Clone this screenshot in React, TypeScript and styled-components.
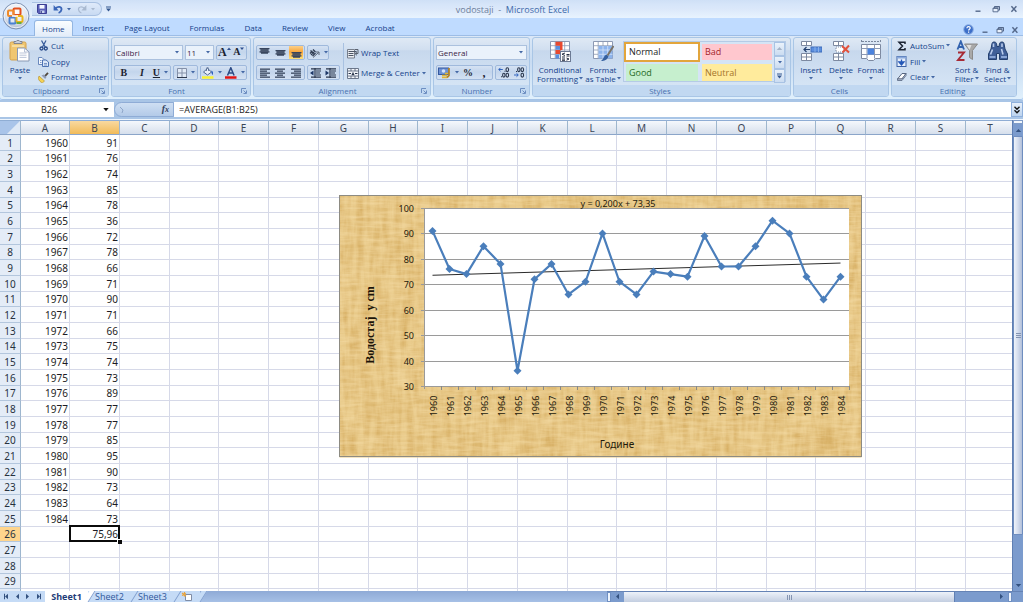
import React from 'react';
import styled, { createGlobalStyle, css } from 'styled-components';

const Global = createGlobalStyle`
  *, *::before, *::after { box-sizing: border-box; }
  html, body { margin: 0; padding: 0; }
  body { font-family: 'Open Sans', 'Noto Sans', sans-serif; font-size: 8px; line-height: 10px; color: #15428b; overflow: hidden; }
  button, input { font: inherit; color: inherit; margin: 0; padding: 0; border: 0; background: none; }
  svg { display: block; flex: none; }
`;

const Window = styled.div`
  display: flex;
  flex-direction: column;
  height: 100vh;
  background: #bfdbff;
`;

/* ---------- Title bar ---------- */

const TitleBar = styled.header`
  position: relative;
  display: flex;
  align-items: center;
  height: 18px;
  padding-left: 32px;
  padding-right: 5px;
  background: linear-gradient(#cfe0f6, #d6e5f9 25%, #dbe8fa 50%, #e8f3fe);
`;

const OfficeButton = styled.button`
  position: absolute;
  left: 2px;
  top: 2px;
  z-index: 2;
`;

const QuickAccess = styled.div`
  display: flex;
  align-items: center;
  gap: 6px;
  width: 70px;
  height: 14px;
  margin-right: 4px;
  padding-left: 5px;
  border: 1px solid #a9c1e2;
  border-left: 0;
  border-radius: 0 7px 7px 0;
  background: linear-gradient(#dfeafa, #c8daf2);
`;

const IconButton = styled.button`
  display: flex;
  align-items: center;
  gap: 4px;
`;

const Title = styled.h1`
  flex: 1;
  margin: 0;
  padding-top: 2px;
  padding-right: 60px;
  text-align: center;
  font-size: 9px;
  font-weight: 400;
  line-height: 12px;
  color: #6d7f9c;
  white-space: pre;
  span { color: #3e6aaa; }
`;

const WindowButtons = styled.div<{ $gap: number }>`
  display: flex;
  align-items: center;
  gap: ${p => p.$gap}px;
`;

/* ---------- Tabs ---------- */

const TabStrip = styled.nav`
  display: flex;
  align-items: flex-end;
  height: 18px;
  padding-left: 34px;
  padding-right: 4px;
  border-bottom: 1px solid #9dbde6;
  background: #bfdbff;
`;

const Tab = styled.button<{ $active?: boolean }>`
  height: 15px;
  padding: 0 10px;
  line-height: 14px;
  ${p => p.$active && css`
    && {
      height: 16px;
      margin-bottom: -1px;
      padding: 0 7px;
      border: 1px solid #93b6e2;
      border-bottom: 0;
      border-radius: 3px 3px 0 0;
      background: linear-gradient(#fafdff, #e3edf9);
    }
  `}
`;

const Spacer = styled.div`
  flex: 1;
`;

/* ---------- Ribbon ---------- */

const Ribbon = styled.div`
  display: flex;
  gap: 2px;
  height: 64px;
  padding: 1px 6px 2px 2px;
  border-radius: 0 0 3px 3px;
  background: linear-gradient(#dbe8f7, #c9dcf2 40%, #e0f0fc 100%);
  border-bottom: 1px solid #a5c3e6;
`;

const GroupBox = styled.section<{ $width: number }>`
  display: flex;
  flex-direction: column;
  flex: none;
  width: ${p => p.$width}px;
  border: 1px solid #a9c6e6;
  border-radius: 3px;
  overflow: hidden;
  background: linear-gradient(#dfe9f5, #d1dff0 20%, #c7d8ed 22%, #d9e8f7);
`;

const GroupBody = styled.div<{ $gap?: number; $pad?: number }>`
  display: flex;
  flex: 1;
  min-height: 0;
  gap: ${p => p.$gap ?? 0}px;
  padding: 0 ${p => p.$pad ?? 2}px;
`;

const GroupLabel = styled.footer`
  display: flex;
  align-items: center;
  flex: none;
  height: 11px;
  padding-right: 3px;
  background: #c1d8f1;
  color: #4a72b0;
  span { flex: 1; text-align: center; }
`;

const BigButton = styled.button<{ $width: number }>`
  display: flex;
  flex-direction: column;
  align-items: center;
  width: ${p => p.$width}px;
  padding-top: 2px;
  line-height: 9px;
  white-space: nowrap;
  svg:first-child { margin-bottom: 3px; }
`;

const CaretLine = styled.span`
  display: flex;
  align-items: center;
  gap: 1px;
  min-height: 9px;
  && svg { margin: 0; }
`;

const SmallColumn = styled.div`
  display: flex;
  flex-direction: column;
`;

const SmallButton = styled.button`
  display: flex;
  align-items: center;
  gap: 2px;
  height: 16px;
  white-space: nowrap;
`;

const ToolRows = styled.div`
  display: flex;
  flex-direction: column;
  gap: 5px;
  padding-top: 7px;
`;

const ToolRow = styled.div`
  display: flex;
  gap: 2px;
  height: 15px;
`;

const ToolSet = styled.div<{ $width: number }>`
  display: flex;
  align-items: center;
  justify-content: space-around;
  width: ${p => p.$width}px;
  border: 1px solid #9fb9dc;
  border-radius: 2px;
  background: linear-gradient(#d5e2f3, #c3d5ec 45%, #d3e1f3);
`;

const Toggle = styled(IconButton)<{ $on?: boolean }>`
  justify-content: center;
  height: 13px;
  min-width: 14px;
  ${p => p.$on && css`&& { background: linear-gradient(#fcd08a, #f9a63a 45%, #fde07a); }`}
`;

const FontSizeToggle = styled(Toggle)`
  gap: 0;
  align-items: flex-start;
`;

const Letter = styled.span<{ $size?: number }>`
  font-family: 'Liberation Serif', serif;
  font-size: ${p => p.$size ?? 10}px;
  line-height: 12px;
  font-weight: 700;
  color: #1c2431;
`;

const Combo = styled.label<{ $width: number }>`
  display: flex;
  align-items: center;
  width: ${p => p.$width}px;
  height: 15px;
  padding: 0 3px 0 1px;
  border: 1px solid #abc1de;
  background: #eaf2fb;
  color: #3a2342;
  input { flex: 1; min-width: 0; width: 10px; }
`;

const Divider = styled.div`
  width: 1px;
  margin: 5px 3px;
  background: #a8c1e1;
`;

const Gallery = styled.div`
  display: grid;
  grid-template-columns: 76px 74px 11px;
  grid-template-rows: 20px 21px;
  margin: 3px 0 3px 1px;
  border: 1px solid #b5cbe6;
  background: #d5e4f5;
`;

const StyleCell = styled.button<{ $bg: string; $fg: string; $selected?: boolean }>`
  && {
    margin: 2px;
    padding-left: 3px;
    text-align: left;
    font-size: 9px;
    color: ${p => p.$fg};
    background: ${p => p.$bg};
  }
  ${p => p.$selected && css`
    &&& {
      margin: 0;
      border: 2px solid #e2a53c;
    }
  `}
`;

const GalleryArrows = styled.div`
  grid-column: 3;
  grid-row: 1 / 3;
  display: grid;
  grid-template-rows: 1fr 1fr 1fr;
  button {
    display: grid;
    place-items: center;
    border: 1px solid #a9c3e4;
    background: linear-gradient(#eaf2fb, #cbdcf1);
  }
`;

/* ---------- Formula bar ---------- */

const FormulaBar = styled.div`
  display: flex;
  height: 20px;
  padding: 2px 0;
  background: #a9c5e6;
  color: #1b1b1b;
  border-bottom: 1px solid #eef5fd;
`;

const NameBox = styled.label`
  display: flex;
  align-items: center;
  width: 114px;
  padding-right: 5px;
  background: #fff;
  font-size: 9px;
  input { flex: 1; min-width: 0; padding-right: 5px; text-align: center; }
`;

const FxArea = styled.div`
  display: flex;
  align-items: center;
  width: 60px;
  padding: 0 4px;
  justify-content: space-between;
  border: 1px solid #8facd6;
  border-radius: 8px 0 0 8px;
  background: linear-gradient(#cfdff3, #b3cae8);
`;

const Fx = styled.button`
  && {
    font-family: 'Liberation Serif', serif;
    font-style: italic;
    font-weight: 700;
    font-size: 10px;
    color: #33415c;
  }
  small { font-size: 8px; }
`;

const FormulaInput = styled.input`
  && {
    flex: 1;
    padding-left: 5px;
    background: #fff;
    font-size: 9px;
  }
`;

const ExpandButton = styled.button`
  display: grid;
  place-items: center;
  width: 12px;
  && { border: 1px solid #8fb0dc; background: linear-gradient(#e7f0fb, #bcd3ee); }
`;

/* ---------- Sheet ---------- */

const Work = styled.main`
  display: flex;
  flex: 1;
  min-height: 0;
`;

const SheetArea = styled.div`
  position: relative;
  flex: 1;
  min-width: 0;
  overflow: hidden;
  background: #fff;
`;

const Sheet = styled.table`
  width: 100%;
  min-width: 1015px;
  table-layout: fixed;
  border-collapse: separate;
  border-spacing: 0;
  font-family: 'Noto Sans', sans-serif;
  font-size: 10px;
  line-height: 14px;
  color: #1c1c24;
  th, td { padding: 0; }
`;

const RowLine = styled.tr<{ $short?: boolean }>`
  height: ${p => (p.$short ? 15 : 16)}px;
`;

const ColHead = styled.th<{ $active?: boolean }>`
  height: 15px;
  border-right: 1px solid #9eb6ce;
  border-bottom: 1px solid #8ba5c9;
  border-top: 1px solid #8fadd4;
  font-weight: 400;
  line-height: 12px;
  color: #3a4656;
  background: ${p => (p.$active ? 'linear-gradient(#f9d9a0, #f1bb59)' : 'linear-gradient(#f5f8fc, #d6dfec)')};
`;

const Corner = styled(ColHead)`
  background: linear-gradient(135deg, #a9c4e9 60%, #dfe9f6 61%);
`;

const RowHead = styled.th<{ $active?: boolean }>`
  border-right: 1px solid #9eb6ce;
  border-bottom: 1px solid #b3c6dd;
  font-weight: 400;
  color: #273140;
  background: ${p => (p.$active ? '#ffd58d' : '#e4ecf7')};
`;

const Cell = styled.td<{ $selected?: boolean }>`
  border-right: 1px solid #d6d9e8;
  border-bottom: 1px solid #d6d9e8;
  text-align: right;
  && { padding-right: 1px; }
  ${p => p.$selected && css`
    position: relative;
    z-index: 1;
    &::before {
      content: '';
      position: absolute;
      inset: -2px -1px -1px -1px;
      border: 2px solid #0b0b0b;
    }
    &::after {
      content: '';
      position: absolute;
      right: -3px;
      bottom: -3px;
      width: 5px;
      height: 5px;
      background: #0b0b0b;
      border-left: 1px solid #fff;
      border-top: 1px solid #fff;
    }
  `}
`;

const ChartFrame = styled.figure`
  position: absolute;
  left: 339px;
  top: 75px;
  margin: 0;
`;

/* ---------- Scroll bars and sheet tabs ---------- */

const VScroll = styled.div`
  display: flex;
  flex-direction: column;
  width: 11px;
  background: #7b9bcd;
  border-left: 1px solid #5f7fb3;
`;

const SplitGrip = styled.div`
  height: 4px;
  border: 1px solid #7f9cc8;
  background: #f2f7fd;
`;

const ScrollArrow = styled.button`
  display: grid;
  place-items: center;
  flex: none;
  width: 10px;
  height: 12px;
`;

const HScrollArrow = styled(ScrollArrow)`
  width: 13px;
  height: 9px;
`;

const VThumb = styled.div`
  display: grid;
  place-items: center;
  flex: 400;
  border: 1px solid #6e8dbf;
  border-radius: 1px;
  background: linear-gradient(90deg, #eef3fa, #d3dced 50%, #b2c0da);
`;

const VTrack = styled.div`
  flex: 44;
`;

const BottomBar = styled.div`
  display: flex;
  height: 11px;
  background: linear-gradient(#8faad6, #a6c0e6);
`;

const SheetTabs = styled.div`
  display: flex;
  flex: 607;
  min-width: 0;
`;

const NavButtons = styled.div`
  display: flex;
  justify-content: space-around;
  align-items: center;
  width: 45px;
  padding: 0 1px;
  background: #c5dbf6;
`;

const SheetTab = styled.button<{ $active?: boolean; $width: number }>`
  position: relative;
  display: flex;
  justify-content: center;
  align-items: center;
  width: ${p => p.$width}px;
  height: 11px;
  && {
    line-height: 10px;
    font-size: 9px;
    font-weight: ${p => (p.$active ? 700 : 400)};
    color: ${p => (p.$active ? '#1e3c78' : '#31589b')};
    background: ${p => (p.$active ? '#fff' : '#c5dbf6')};
  }
  &::after {
    content: '';
    position: absolute;
    z-index: 1;
    right: -4px;
    top: 0;
    width: 6px;
    height: 11px;
    border-right: 1px solid #7f9dcd;
    background: ${p => (p.$active ? '#fff' : '#c5dbf6')};
    transform: skewX(-32deg);
  }
`;

const HScroll = styled.div`
  display: flex;
  flex: 416;
  border-top: 1px solid #6583b5;
  background: #7b9bcd;
`;

const HThumb = styled.div`
  display: grid;
  place-items: center;
  flex: 331;
  border-right: 1px solid #5f7fb3;
  background: linear-gradient(#edf2fa, #c3cee1);
`;

const HTrack = styled.div`
  flex: 40;
`;

const HGrip = styled.div`
  width: 4px;
  border: 1px solid #6f8fc2;
  background: #eff5fd;
`;

const ScrollCorner = styled.div`
  width: 11px;
`;

/* ---------- Icons ---------- */

const Caret = ({ color = '#4468a5', big }: { color?: string; big?: boolean }) => (
  <svg width={big ? 6 : 4} height={big ? 4 : 3} viewBox="0 0 4 3" aria-hidden="true">
    <path d="M0 0h4L2 2.5z" fill={color} />
  </svg>
);

const Arrow = ({ dir, color = '#33517f', bar }: { dir: 'left' | 'right' | 'up' | 'down'; color?: string; bar?: boolean }) => {
  const turn = { right: 0, down: 90, left: 180, up: 270 }[dir];
  return (
    <svg width="7" height="7" viewBox="0 0 7 7" aria-hidden="true">
      <g transform={`rotate(${turn} 3.5 3.5)`} fill={color}>
        <path d="M2 .8l3 2.7-3 2.7z" />
        {bar && <path d="M5 .8h1v5.4H5z" />}
      </g>
    </svg>
  );
};

const Launcher = () => (
  <IconButton aria-label="More options">
    <svg width="6" height="6" viewBox="0 0 6 6">
      <path d="M.5 5V.5H5M2.5 2.5l2.5 2.5M5.5 2.5v3h-3" fill="none" stroke="#6386bb" strokeWidth=".9" />
    </svg>
  </IconButton>
);

const OfficeLogo = () => (
  <svg width="28" height="28" viewBox="0 0 28 28">
    <defs>
      <radialGradient id="orb" cx=".5" cy=".35" r=".65">
        <stop offset="0" stopColor="#fff" />
        <stop offset=".6" stopColor="#e3e8f1" />
        <stop offset="1" stopColor="#a5b4cd" />
      </radialGradient>
    </defs>
    <circle cx="14" cy="14" r="13" fill="url(#orb)" stroke="#7f93b5" />
    <circle cx="14" cy="14" r="11.8" fill="none" stroke="#f8fbff" strokeWidth=".8" />
    <g fill="none" strokeWidth="2">
      <rect x="11.5" y="6.5" width="7" height="6.5" rx="1" stroke="#e2501f" />
      <rect x="6" y="8.5" width="5.5" height="5.5" rx="1" stroke="#f08b2a" />
      <rect x="7.5" y="15.5" width="6" height="6" rx="1" stroke="#4a82d2" />
      <rect x="14.5" y="14" width="6" height="6" rx="1" stroke="#e9b51c" />
      <path d="M14.5 21h5" stroke="#6aab3a" />
      <path d="M10 14h6" stroke="#fff" strokeWidth="1.5" />
    </g>
  </svg>
);

const SaveIcon = () => (
  <svg width="10" height="10" viewBox="0 0 10 10">
    <path d="M.5.5h9v9h-8l-1-1z" fill="#5a5fb8" stroke="#3c3f94" />
    <path d="M2.5 1h5v3.6h-5z" fill="#f4f7ff" />
    <path d="M3 6.5h4.5V9H3z" fill="#c9d4ee" />
    <path d="M3.6 7h1.2v2H3.6z" fill="#2c3380" />
  </svg>
);

const UndoIcon = ({ faded }: { faded?: boolean }) => (
  <svg width="10" height="9" viewBox="0 0 10 9">
    <g transform={faded ? 'translate(10 0) scale(-1 1)' : undefined}>
      <path d="M2.5 3.5C5 1 8.8 1.6 8.5 4.6 8.3 6.2 7.2 7.4 5.6 8" fill="none" stroke={faded ? '#a9b9d0' : '#3b66b8'} strokeWidth={faded ? 1.2 : 1.8} />
      <path d="M.6 0v5.4h5z" fill={faded ? '#a9b9d0' : '#3b66b8'} />
    </g>
  </svg>
);

const MoreIcon = () => (
  <svg width="5" height="6" viewBox="0 0 5 6"><path d="M0 .4h5v1H0zM0 2.6h5L2.5 5.4z" fill="#35588f" /></svg>
);

const MinIcon = () => (
  <svg width="8" height="8" viewBox="0 0 8 8"><path d="M1.5 5.5h5v1.4h-5z" fill="#54688a" /></svg>
);
const RestoreIcon = () => (
  <svg width="8" height="8" viewBox="0 0 8 8">
    <path d="M2.5 5V1.5h5v3.6H6M2.5 1.9h5" fill="none" stroke="#54688a" />
    <path d="M1 3h5v3.8H1zM1 3.4h5" fill="#e8f0fb" stroke="#54688a" strokeWidth=".9" />
  </svg>
);
const CloseIcon = () => (
  <svg width="8" height="8" viewBox="0 0 8 8"><path d="M1.4 1.2l5 5.6M6.4 1.2l-5 5.6" stroke="#54688a" strokeWidth="1.4" /></svg>
);
const HelpIcon = () => (
  <svg width="11" height="11" viewBox="0 0 11 11">
    <circle cx="5.5" cy="5.5" r="4.8" fill="#3d6fc9" stroke="#8eb0e4" />
    <path d="M3.9 4.3c0-2.4 3.4-2.2 3.3-.2 0 1.2-1.6 1.2-1.6 2.5M5.6 7.5v1.2" fill="none" stroke="#fff" strokeWidth="1.2" />
  </svg>
);

const PasteIcon = () => (
  <svg width="22" height="22" viewBox="0 0 22 22">
    <rect x="1" y="2" width="16" height="18" rx="1.5" fill="#f0c670" stroke="#d3a14c" />
    <path d="M5 3.5V1.5h2C7.5 0 10.5 0 11 1.5h2v2z" fill="#c9cfdb" stroke="#6e7689" strokeWidth=".8" />
    <path d="M3 5h12v2H3z" fill="#f8dd9f" />
    <path d="M8.5 8h7l4.5 4v9H8.5z" fill="#fff" stroke="#8a99b5" />
    <path d="M15.5 8v4H20M10.5 13h7M10.5 15.2h7M10.5 17.4h7" fill="none" stroke="#a9b6cf" strokeWidth=".8" />
  </svg>
);
const CutIcon = () => (
  <svg width="11" height="11" viewBox="0 0 11 11">
    <path d="M3.5.5l3.7 6.5M8 .5L4.5 7" stroke="#3c5f9c" strokeWidth="1.3" />
    <circle cx="3.5" cy="8.5" r="1.5" fill="none" stroke="#274a8a" strokeWidth="1.3" />
    <circle cx="7.8" cy="8.5" r="1.5" fill="none" stroke="#274a8a" strokeWidth="1.3" />
  </svg>
);
const CopyIcon = () => (
  <svg width="11" height="11" viewBox="0 0 11 11">
    <path d="M.5 1.5H4l2 2v5H.5z" fill="#f3f7fd" stroke="#6a89bd" />
    <path d="M4.5 4H8l2.5 2v4.5h-6z" fill="#dce8f8" stroke="#4d73b3" />
    <path d="M2 4.5h1.5M2 6.5h1.5M6 7.5h3M6 9h3" stroke="#4d73b3" strokeWidth=".7" />
  </svg>
);
const BrushIcon = () => (
  <svg width="11" height="11" viewBox="0 0 11 11">
    <path d="M1 4l5.5 5-2 1.8C2.5 10.5 1 8.5.3 6.5z" fill="#f5d354" stroke="#b28a22" strokeWidth=".6" />
    <path d="M3.5 3.5l3.7 3.6 1.3-2-2.6-2.6z" fill="#8f9cb6" />
    <path d="M7.2 3.8L10 .8" stroke="#51473d" strokeWidth="1.8" />
  </svg>
);

const Lines = ({ inset, from }: { inset: number; from: 'left' | 'center' | 'right' }) => {
  const x = { left: 0, center: inset / 2, right: inset }[from];
  return (
    <svg width="10" height="10" viewBox="0 0 10 10" fill="#39465e">
      {[0, 2, 4, 6, 8].map((y, i) => (
        <rect key={y} x={i % 2 ? x : 0} y={y + 0.5} width={i % 2 ? 10 - inset : 10} height="1.3" />
      ))}
    </svg>
  );
};
const ValignIcon = ({ y }: { y: number }) => (
  <svg width="11" height="11" viewBox="0 0 11 11" fill="#39465e">
    <path d={`M.5 ${y}h10v1.3H.5zM1.5 ${y + 1.6}h8v1.2h-8zM.5 ${y + 3.2}h10v1.2H.5zM2 ${y + 4.6}h7v1.2h-7z`} />
    <path d={`M1.5 ${y}h8v5h-8z`} opacity=".5" />
  </svg>
);
const OrientIcon = () => (
  <svg width="11" height="10" viewBox="0 0 11 10">
    <path d="M1 5.5l2.5-2.5M1.5 2.5l3.5 3.5M4 1.5l2.5 2.5M3.5 8l3-3M2 7l3-3" stroke="#2e3a50" strokeWidth="1.3" />
    <path d="M4 9.5l5.5-5M7 4h3v3" fill="none" stroke="#5a6577" />
  </svg>
);
const IndentIcon = ({ dir }: { dir: 1 | -1 }) => (
  <svg width="12" height="10" viewBox="0 0 12 10">
    <path d="M1 .8h10M6 3h5M6 5h4M6 7h5M1 9.2h10M5 0v10" stroke="#2b374d" strokeWidth="1.2" />
    <path d={dir === 1 ? 'M0 5l3.5-2.500v5z' : 'M4 5L.5 2.500v5z'} fill="#1d3767" />
  </svg>
);
const WrapIcon = () => (
  <svg width="12" height="11" viewBox="0 0 12 11">
    <path d="M.5 1.500h7v8.500h-7z" fill="#e9ecf1" stroke="#777f8c" />
    <path d="M1.500 3.500h8M1.500 5.500h5M1.500 7.500h5" stroke="#4d5666" />
    <path d="M8 1.500h3v4H8.500M10 3.800L8 5.600l2 1.700" fill="none" stroke="#5a6270" />
  </svg>
);
const MergeIcon = () => (
  <svg width="12" height="11" viewBox="0 0 12 11">
    <path d="M.5.5h11v10H.5zM.5 3h11M.5 8h11M4 .5V3M8 .5V3M4 8v2.500M8 8v2.500" fill="#f2f5fa" stroke="#5f6b80" strokeWidth=".9" />
    <path d="M1.500 5.500h2.500M8 5.500h2.500" stroke="#2b374d" />
    <path d="M6 3.800l1.600 3.400H4.400z" fill="#2b374d" />
  </svg>
);
const BorderIcon = () => (
  <svg width="10" height="10" viewBox="0 0 10 10">
    <path d="M.5.5h9v9h-9zM5 .5v9M.5 5h9" fill="#e1eaf6" stroke="#8491a9" />
    <path d="M0 9.500h10" stroke="#2d384c" />
  </svg>
);
const FillIcon = () => (
  <svg width="12" height="12" viewBox="0 0 12 12">
    <path d="M1.500 5l4-3.500L9.500 5 5.500 8z" fill="#eaf0f9" stroke="#536a91" />
    <path d="M4.500 4V1.500c0-1.500 2-1.500 2 0V4" fill="none" stroke="#536a91" strokeWidth=".8" />
    <path d="M9.300 3.500c2 .8 2 2.500 1.500 4.500-1-.5-1.500-2-1.500-4.500z" fill="#2f63c0" />
    <path d="M0 9.200h11.500v2.600H0z" fill="#f8f231" />
  </svg>
);
const FontColorIcon = () => (
  <svg width="12" height="12" viewBox="0 0 12 12">
    <path d="M2.500 8.500L5.800.8l3.300 7.700M3.600 6h4.300" fill="none" stroke="#2b4a85" strokeWidth="1.500" />
    <path d="M0 9.200h11.500v2.600H0z" fill="#e21414" />
  </svg>
);
const CurrencyIcon = () => (
  <svg width="13" height="12" viewBox="0 0 13 12">
    <rect x=".5" y="1" width="10" height="6.500" fill="#6d92d4" stroke="#35599f" />
    <circle cx="5.500" cy="4" r="1.800" fill="#d5e2f7" />
    <path d="M4 8.500h5M4 10.500h5M7 6.500h3" stroke="#e0b638" strokeWidth="1.500" />
    <path d="M11 1v7.500l-2 2" fill="none" stroke="#b5852a" strokeWidth="1.800" />
  </svg>
);
const DecimalIcon = ({ less }: { less?: boolean }) => (
  <svg width="12" height="11" viewBox="0 0 12 11">
    <g fill="none" stroke="#2b374d" strokeWidth="1.100">
      <ellipse cx="9.300" cy="2.700" rx="1.300" ry="1.900" />
      {less && <ellipse cx="5.800" cy="2.700" rx="1.200" ry="1.900" />}
      <ellipse cx="9.300" cy="8.200" rx="1.300" ry="1.900" />
      {!less && <ellipse cx="5.800" cy="8.200" rx="1.200" ry="1.900" />}
    </g>
    <path d={less ? 'M1 8h4M3.500 6.300L5.300 8 3.500 9.700' : 'M.8 2.500h4M2.500.8L.8 2.500l1.700 1.700'} fill="none" stroke="#2f62bd" />
    <path d={less ? 'M3 4h1v1H3z' : 'M6.500 3.800h1v1h-1zM3 9.200h1v1H3z'} fill="#2b374d" />
  </svg>
);

const GridBase = ({ children }: { children?: React.ReactNode }) => (
  <svg width="22" height="22" viewBox="0 0 22 22">
    <path d="M1.500 1.500h19v17h-19z" fill="#fff" stroke="#8c99b3" />
    <path d="M1.500 5.700h19M1.500 10h19M1.500 14.300h19M6.200 1.500v17M11 1.500v17M15.700 1.500v17" stroke="#8c99b3" strokeWidth=".8" />
    {children}
  </svg>
);
const ConditionalIcon = () => (
  <GridBase>
    <path d="M6.500 1.800H11v4H6.500zM6.500 10h5v4h-5z" fill="#e8492f" />
    <path d="M6.500 6H11v3.800H6.500zM6.500 14.500H10v4H6.500z" fill="#5a8ede" />
    <path d="M11 1.800h2.500V10H11z" fill="#e8492f" />
    <rect x="11.500" y="11.500" width="10" height="10" fill="#fff" stroke="#6c7a94" />
    <path d="M16 13l-3 1.200 3 1.300M13 17h3M17.500 14.500h3M17.500 16h3M17.500 18l2.500 1-2.500 1.200M13 19h3M13 20.300h3" fill="none" stroke="#242e42" />
  </GridBase>
);
const TableStyleIcon = () => (
  <GridBase>
    <path d="M6.500 6h14v12.500h-14z" fill="#8db4ec" />
    <path d="M6.500 10h14M6.500 14.300h14M11 6v12.500M15.700 6v12.500" stroke="#d7e5fa" strokeWidth=".8" />
    <path d="M15.500 15.500L21.500 6" stroke="#7b7366" strokeWidth="2" />
    <path d="M14.500 14.500l2 2c-1.500 3.500-4 4.500-7.500 4.500 2.500-1.500 3-5.500 5.500-6.500z" fill="#35609f" />
  </GridBase>
);
const InsertIcon = () => (
  <svg width="22" height="22" viewBox="0 0 22 22">
    <path d="M1.500 1.500h10v4h-10zM6.500 1.500v4M1.500 13.500h10v7h-10zM6.500 13.500v7M1.500 17h10" fill="#fff" stroke="#7d89a0" />
    <rect x="11" y="7" width="11" height="5" fill="#5a8ede" stroke="#3e6cba" />
    <path d="M15 7v5M18.500 7v5" stroke="#9fc0f0" strokeWidth=".7" />
    <path d="M4 9.500h6M6.500 7L4 9.500 6.500 12" fill="none" stroke="#24406f" strokeWidth="1.200" />
  </svg>
);
const DeleteIcon = () => (
  <svg width="22" height="22" viewBox="0 0 22 22">
    <path d="M3.500 1.500h10v4h-10zM8.500 1.500v4M3.500 13.500h10v7h-10zM8.500 13.500v7M3.500 17h10" fill="#fff" stroke="#7d89a0" />
    <path d="M6 7h8v5H6z" fill="#fff" stroke="#7d89a0" strokeDasharray="1 1" />
    <path d="M12 6l7 6.500M19 5.500L12.500 12.500" stroke="#e2523c" strokeWidth="2" />
  </svg>
);
const FormatIcon = () => (
  <svg width="22" height="22" viewBox="0 0 22 22">
    <path d="M1.500 0v3M20.500 0v3M2 1.500h18" stroke="#7a879d" strokeDasharray="2 1" />
    <path d="M1.500 4.500h19v14h-5l-2 2h-5l-2-2h-5z" fill="#fff" stroke="#7d89a0" />
    <path d="M1.500 8.500h19M1.500 14.500h19M7 4.500v14M14.500 4.500v14" stroke="#8c99b3" />
    <path d="M7.500 8.500H14v6H7.500z" fill="#4b83de" />
  </svg>
);
const SigmaIcon = () => (
  <svg width="12" height="10" viewBox="0 0 12 10">
    <path d="M9 3V1.300H3L6.500 5 3 8.700h6V7" fill="none" stroke="#1b2332" strokeWidth="1.500" />
  </svg>
);
const FillDownIcon = () => (
  <svg width="12" height="11" viewBox="0 0 12 11">
    <rect x="1" y=".5" width="9" height="10" fill="#e5eefb" stroke="#3d62a6" />
    <path d="M1 .5h9v2H1z" fill="#8aa9dc" />
    <path d="M5.500 3.500v3.500M3 6l2.500 3L8 6z" stroke="#2458b8" strokeWidth="1.300" fill="#2458b8" />
  </svg>
);
const EraserIcon = () => (
  <svg width="12" height="10" viewBox="0 0 12 10">
    <path d="M1.500 7L6 1.500h4L6 7z" fill="#fff" stroke="#56657f" />
    <path d="M1.500 7v1.500H6L10 3.500v-2L6 7z" fill="#c8d3e5" stroke="#56657f" strokeWidth=".8" />
  </svg>
);
const SortIcon = () => (
  <svg width="22" height="22" viewBox="0 0 22 22">
    <path d="M8.500 4h13l-5 6.500v9l-3-2v-7z" fill="#a9a9a9" stroke="#8a8a8a" />
    <path d="M10.500 5h5l-2 5z" fill="#e0e0e0" />
    <path d="M1.500 9.500L4.800 1.500 8 9.500M2.700 7h4.200" fill="none" stroke="#3463ae" strokeWidth="1.900" />
    <path d="M2 12.500h6l-6 7.500h6.500" fill="none" stroke="#a72a35" strokeWidth="1.900" />
  </svg>
);
const BinocularsIcon = () => (
  <svg width="22" height="22" viewBox="0 0 22 22">
    <path d="M5 3.500C5 1.500 9 1.500 9.500 3.500l.5 3h2l.5-3c.5-2 4.500-2 4.500 0l1 5.500 2.500 5v5.500h-8v-6h-3v6H1.500V14L4 9z" fill="#3f5f98" stroke="#24406f" />
    <path d="M5.500 9.500L3.500 14.500M14.500 9l1.500 5.500M6.500 3.500v3.500M15 3.500v3.500" stroke="#b8cbec" strokeWidth="1.600" />
    <path d="M2.500 17h6M14 17h6" stroke="#88a5d6" strokeWidth="2" />
  </svg>
);
const NewSheetIcon = () => (
  <svg width="12" height="9" viewBox="0 0 12 9">
    <path d="M4.500 2.500h6v6h-6z" fill="#fff" stroke="#7f8da6" />
    <path d="M1 1l4 3M3.500 0v4.500M1 3.500l4-2" stroke="#e9a33a" strokeWidth="1.200" />
  </svg>
);

/* ---------- Chart ---------- */

const years = Array.from({ length: 25 }, (_, i) => 1960 + i);
const levels = [91, 76, 74, 85, 78, 36, 72, 78, 66, 71, 90, 71, 66, 75, 74, 73, 89, 77, 77, 85, 95, 90, 73, 64, 73];

const PLOT = { left: 85, right: 510, top: 13, bottom: 191 };
const xAt = (i: number) => PLOT.left + ((i + 0.5) * (PLOT.right - PLOT.left)) / levels.length;
const yAt = (v: number) => PLOT.bottom - ((v - 30) * (PLOT.bottom - PLOT.top)) / 70;

const ChartText = styled.text`
  font-family: 'Noto Sans', sans-serif;
  font-size: 9px;
  fill: #241a0c;
`;

const ChartTitleText = styled(ChartText)`
  font-size: 10px;
`;

const AxisTitle = styled.text`
  font-family: 'Liberation Serif', serif;
  font-size: 12px;
  font-weight: 700;
  fill: #1c1408;
  white-space: pre;
`;

const Chart = () => (
  <ChartFrame>
    <svg width="523" height="263" viewBox="0 0 523 263" role="img" aria-label="Водостај">
      <defs>
        <filter id="warp" x="0" y="0" width="100%" height="100%" colorInterpolationFilters="sRGB">
          <feTurbulence type="fractalNoise" baseFrequency="0.16 0.03" numOctaves="3" seed="4" />
          <feColorMatrix values="0 0 0 0 .76  0 0 0 0 .56  0 0 0 0 .22  2 0 0 0 -.6" />
        </filter>
        <filter id="weft" x="0" y="0" width="100%" height="100%" colorInterpolationFilters="sRGB">
          <feTurbulence type="fractalNoise" baseFrequency="0.04 0.3" numOctaves="3" seed="9" />
          <feColorMatrix values="0 0 0 0 .97  0 0 0 0 .88  0 0 0 0 .68  2 0 0 0 -.6" />
        </filter>
      </defs>
      <rect x=".5" y=".5" width="522" height="262" fill="#e8c988" />
      <rect x="1" y="1" width="521" height="261" filter="url(#warp)" opacity=".4" />
      <rect x="1" y="1" width="521" height="261" filter="url(#weft)" opacity=".5" />
      <rect x=".5" y=".5" width="522" height="261" fill="none" stroke="#8d8b82" />
      <rect x={PLOT.left} y={PLOT.top} width={PLOT.right - PLOT.left} height={PLOT.bottom - PLOT.top} fill="#fff" />
      {[30, 40, 50, 60, 70, 80, 90, 100].map(v => (
        <g key={v}>
          <path d={`M${PLOT.left - 3} ${Math.round(yAt(v)) + 0.5}H${PLOT.right}`} stroke="#9a9a9a" />
          <ChartText x="75" y={Math.round(yAt(v)) + 4} textAnchor="end">{v}</ChartText>
        </g>
      ))}
      <path d={`M${PLOT.left + 0.5} ${PLOT.top}V${PLOT.bottom + 3}`} stroke="#9a9a9a" />
      {years.map((year, i) => (
        <g key={year}>
          <path d={`M${Math.round(PLOT.left + (i + 1) * 17) + 0.5} ${PLOT.bottom}v4`} stroke="#8a8a86" />
          <ChartText textAnchor="middle" transform={`translate(${Math.round(xAt(i)) + 4} 211) rotate(-90)`}>{year}</ChartText>
        </g>
      ))}
      <path d={`M${xAt(0)} ${yAt(73.55)}L${xAt(24)} ${yAt(78.35)}`} stroke="#2b2b2b" />
      <polyline points={levels.map((v, i) => `${xAt(i)},${yAt(v)}`).join(' ')} fill="none" stroke="#4a7ebb" strokeWidth="2.200" strokeLinejoin="round" />
      {levels.map((v, i) => (
        <path key={years[i]} d={`M${xAt(i)} ${yAt(v) - 4}l4 4-4 4-4-4z`} fill="#4a7ebb" />
      ))}
      <ChartText x="279" y="12" textAnchor="middle">y = 0,200x + 73,35</ChartText>
      <ChartTitleText x="278" y="253" textAnchor="middle">Године</ChartTitleText>
      <AxisTitle textAnchor="middle" transform="translate(35 130) rotate(-90)">{'Водостај  у cm'}</AxisTitle>
    </svg>
  </ChartFrame>
);

/* ---------- Parts ---------- */

const Group = ({ name, width, launcher, gap, pad, children }: {
  name: string; width: number; launcher?: boolean; gap?: number; pad?: number; children: React.ReactNode;
}) => (
  <GroupBox $width={width} aria-label={name}>
    <GroupBody $gap={gap} $pad={pad}>{children}</GroupBody>
    <GroupLabel><span>{name}</span>{launcher && <Launcher />}</GroupLabel>
  </GroupBox>
);

const columns = 'ABCDEFGHIJKLMNOPQRST'.split('');
const columnWidth = (i: number) => (i % 4 === 3 || i === 0 ? 49 : 50);
const rowNumbers = Array.from({ length: 29 }, (_, i) => i + 1);

const cellValue = (col: string, row: number) => {
  if (col === 'A' && row <= 25) return years[row - 1];
  if (col === 'B' && row <= 25) return levels[row - 1];
  if (col === 'B' && row === 26) return '75,96';
  return null;
};

export default function App() {
  return (
    <Window>
      <Global />
      <TitleBar>
        <OfficeButton aria-label="Office"><OfficeLogo /></OfficeButton>
        <QuickAccess>
          <IconButton aria-label="Save"><SaveIcon /></IconButton>
          <IconButton aria-label="Undo"><UndoIcon /><Caret /></IconButton>
          <IconButton aria-label="Redo"><UndoIcon faded /><Caret color="#a9b9d0" /></IconButton>
        </QuickAccess>
        <IconButton aria-label="Customize"><MoreIcon /></IconButton>
        <Title>vodostaji  -  <span>Microsoft Excel</span></Title>
        <WindowButtons $gap={10}>
          <IconButton aria-label="Minimize"><MinIcon /></IconButton>
          <IconButton aria-label="Restore"><RestoreIcon /></IconButton>
          <IconButton aria-label="Close"><CloseIcon /></IconButton>
        </WindowButtons>
      </TitleBar>

      <TabStrip>
        <Tab $active>Home</Tab>
        {['Insert', 'Page Layout', 'Formulas', 'Data', 'Review', 'View', 'Acrobat'].map(t => <Tab key={t}>{t}</Tab>)}
        <Spacer />
        <WindowButtons $gap={7}>
          <IconButton aria-label="Help"><HelpIcon /></IconButton>
          <IconButton aria-label="Minimize workbook"><MinIcon /></IconButton>
          <IconButton aria-label="Restore workbook"><RestoreIcon /></IconButton>
          <IconButton aria-label="Close workbook"><CloseIcon /></IconButton>
        </WindowButtons>
      </TabStrip>

      <Ribbon>
        <Group name="Clipboard" width={107} launcher gap={2} pad={1}>
          <BigButton $width={32}><PasteIcon />Paste<CaretLine><Caret /></CaretLine></BigButton>
          <SmallColumn>
            <SmallButton><CutIcon />Cut</SmallButton>
            <SmallButton><CopyIcon />Copy</SmallButton>
            <SmallButton><BrushIcon />Format Painter</SmallButton>
          </SmallColumn>
        </Group>

        <Group name="Font" width={140} launcher>
          <ToolRows>
            <ToolRow>
              <Combo $width={69}><input aria-label="Font" defaultValue="Calibri" /><Caret /></Combo>
              <Combo $width={29}><input aria-label="Font size" defaultValue="11" /><Caret /></Combo>
              <ToolSet $width={31}>
                <FontSizeToggle aria-label="Grow font">
                  <Letter $size={12}>A</Letter>
                  <svg width="4" height="5" viewBox="0 0 4 5"><path d="M0 4l2-2.500L4 4z" fill="#2e4f8f" /></svg>
                </FontSizeToggle>
                <FontSizeToggle aria-label="Shrink font">
                  <Letter>A</Letter>
                  <svg width="4" height="5" viewBox="0 0 4 5"><path d="M0 1.500h4L2 4z" fill="#2e4f8f" /></svg>
                </FontSizeToggle>
              </ToolSet>
            </ToolRow>
            <ToolRow>
              <ToolSet $width={57}>
                <Toggle><Letter>B</Letter></Toggle>
                <Toggle><Letter><i>I</i></Letter></Toggle>
                <Toggle><Letter><u>U</u></Letter><Caret /></Toggle>
              </ToolSet>
              <ToolSet $width={25}><Toggle aria-label="Borders"><BorderIcon /><Caret /></Toggle></ToolSet>
              <ToolSet $width={47}>
                <Toggle aria-label="Fill color"><FillIcon /><Caret /></Toggle>
                <Toggle aria-label="Font color"><FontColorIcon /><Caret /></Toggle>
              </ToolSet>
            </ToolRow>
          </ToolRows>
        </Group>

        <Group name="Alignment" width={178} launcher>
          <ToolRows>
            <ToolRow>
              <ToolSet $width={49}>
                <Toggle aria-label="Top align"><ValignIcon y={1} /></Toggle>
                <Toggle aria-label="Middle align"><ValignIcon y={3} /></Toggle>
                <Toggle aria-label="Bottom align" $on><ValignIcon y={5} /></Toggle>
              </ToolSet>
              <ToolSet $width={22}><Toggle aria-label="Orientation"><OrientIcon /><Caret /></Toggle></ToolSet>
            </ToolRow>
            <ToolRow>
              <ToolSet $width={49}>
                <Toggle aria-label="Left"><Lines inset={3} from="left" /></Toggle>
                <Toggle aria-label="Center"><Lines inset={4} from="center" /></Toggle>
                <Toggle aria-label="Right"><Lines inset={3} from="right" /></Toggle>
              </ToolSet>
              <ToolSet $width={33}>
                <Toggle aria-label="Decrease indent"><IndentIcon dir={1} /></Toggle>
                <Toggle aria-label="Increase indent"><IndentIcon dir={-1} /></Toggle>
              </ToolSet>
            </ToolRow>
          </ToolRows>
          <Divider />
          <ToolRows>
            <ToolRow><SmallButton><WrapIcon />Wrap Text</SmallButton></ToolRow>
            <ToolRow><SmallButton><MergeIcon />Merge &amp; Center <Caret /></SmallButton></ToolRow>
          </ToolRows>
        </Group>

        <Group name="Number" width={97} launcher>
          <ToolRows>
            <ToolRow><Combo $width={91}><input aria-label="Number format" defaultValue="General" /><Caret /></Combo></ToolRow>
            <ToolRow>
              <ToolSet $width={57}>
                <Toggle aria-label="Currency"><CurrencyIcon /><Caret /></Toggle>
                <Toggle><Letter>%</Letter></Toggle>
                <Toggle><Letter $size={12}>,</Letter></Toggle>
              </ToolSet>
              <ToolSet $width={32}>
                <Toggle aria-label="Increase decimal"><DecimalIcon /></Toggle>
                <Toggle aria-label="Decrease decimal"><DecimalIcon less /></Toggle>
              </ToolSet>
            </ToolRow>
          </ToolRows>
        </Group>

        <Group name="Styles" width={259} pad={3}>
          <BigButton $width={48}><ConditionalIcon />Conditional<CaretLine>Formatting <Caret /></CaretLine></BigButton>
          <BigButton $width={38}><TableStyleIcon />Format<CaretLine>as Table <Caret /></CaretLine></BigButton>
          <Gallery>
            <StyleCell $bg="#ffffff" $fg="#1d1d1d" $selected>Normal</StyleCell>
            <StyleCell $bg="#ffc7ce" $fg="#a31f2b">Bad</StyleCell>
            <StyleCell $bg="#c6efce" $fg="#1f6b1f">Good</StyleCell>
            <StyleCell $bg="#ffeb9c" $fg="#a5752a">Neutral</StyleCell>
            <GalleryArrows>
              <button aria-label="Previous styles"><Arrow dir="up" color="#a5b3c8" /></button>
              <button aria-label="Next styles"><Caret /></button>
              <button aria-label="All styles"><MoreIcon /></button>
            </GalleryArrows>
          </Gallery>
        </Group>

        <Group name="Cells" width={96}>
          <BigButton $width={30}><InsertIcon />Insert<CaretLine><Caret /></CaretLine></BigButton>
          <BigButton $width={30}><DeleteIcon />Delete<CaretLine><Caret /></CaretLine></BigButton>
          <BigButton $width={30}><FormatIcon />Format<CaretLine><Caret /></CaretLine></BigButton>
        </Group>

        <Group name="Editing" width={126} gap={1} pad={4}>
          <SmallColumn>
            <SmallButton><SigmaIcon />AutoSum <Caret /></SmallButton>
            <SmallButton><FillDownIcon />Fill <Caret /></SmallButton>
            <SmallButton><EraserIcon />Clear <Caret /></SmallButton>
          </SmallColumn>
          <BigButton $width={32}><SortIcon />Sort &amp;<CaretLine>Filter <Caret /></CaretLine></BigButton>
          <BigButton $width={30}><BinocularsIcon />Find &amp;<CaretLine>Select <Caret /></CaretLine></BigButton>
        </Group>
      </Ribbon>

      <FormulaBar>
        <NameBox><input aria-label="Name box" defaultValue="B26" /><Caret big color="#111" /></NameBox>
        <FxArea>
          <svg width="6" height="8" viewBox="0 0 6 8"><path d="M1 1l3 3-1 3" fill="none" stroke="#8ea6c9" /></svg>
          <Fx>f<small>x</small></Fx>
        </FxArea>
        <FormulaInput aria-label="Formula" defaultValue="=AVERAGE(B1:B25)" />
        <ExpandButton aria-label="Expand formula bar">
          <svg width="6" height="8" viewBox="0 0 6 8"><path d="M.5.8L3 3.200 5.500.8M.5 4.300L3 6.700l2.500-2.400" fill="none" stroke="#111" strokeWidth="1.400" /></svg>
        </ExpandButton>
      </FormulaBar>

      <Work>
        <SheetArea>
          <Sheet>
            <colgroup>
              <col width={21} />
              {columns.map((c, i) => <col key={c} width={c === 'T' ? undefined : columnWidth(i)} />)}
            </colgroup>
            <thead>
              <tr>
                <Corner aria-label="Select all" />
                {columns.map(c => <ColHead key={c} scope="col" $active={c === 'B'}>{c}</ColHead>)}
              </tr>
            </thead>
            <tbody>
              {rowNumbers.map(r => (
                <RowLine key={r} $short={r % 3 === 2}>
                  <RowHead scope="row" $active={r === 26}>{r}</RowHead>
                  {columns.map(c => <Cell key={c} $selected={c === 'B' && r === 26}>{cellValue(c, r)}</Cell>)}
                </RowLine>
              ))}
              <RowLine>
                <RowHead />
                {columns.map(c => <Cell key={c} />)}
              </RowLine>
            </tbody>
          </Sheet>
          <Chart />
        </SheetArea>
        <VScroll>
          <SplitGrip />
          <ScrollArrow aria-label="Scroll up"><Arrow dir="up" /></ScrollArrow>
          <VThumb>
            <svg width="5" height="5" viewBox="0 0 5 5"><path d="M0 .5h5M0 2.500h5M0 4.500h5" stroke="#8494b1" /></svg>
          </VThumb>
          <VTrack />
          <ScrollArrow aria-label="Scroll down"><Arrow dir="down" /></ScrollArrow>
        </VScroll>
      </Work>

      <BottomBar>
        <SheetTabs>
          <NavButtons>
            <IconButton aria-label="First sheet"><Arrow dir="left" bar /></IconButton>
            <IconButton aria-label="Previous sheet"><Arrow dir="left" /></IconButton>
            <IconButton aria-label="Next sheet"><Arrow dir="right" /></IconButton>
            <IconButton aria-label="Last sheet"><Arrow dir="right" bar /></IconButton>
          </NavButtons>
          <SheetTab $active $width={43}>Sheet1</SheetTab>
          <SheetTab $width={43}>Sheet2</SheetTab>
          <SheetTab $width={43}>Sheet3</SheetTab>
          <SheetTab $width={26} aria-label="Insert worksheet"><NewSheetIcon /></SheetTab>
        </SheetTabs>
        <HScroll>
          <HGrip />
          <HScrollArrow aria-label="Scroll left"><Arrow dir="left" /></HScrollArrow>
          <HThumb>
            <svg width="5" height="5" viewBox="0 0 5 5"><path d="M.5 0v5M2.500 0v5M4.500 0v5" stroke="#8494b1" /></svg>
          </HThumb>
          <HTrack />
          <HScrollArrow aria-label="Scroll right"><Arrow dir="right" /></HScrollArrow>
          <HGrip />
          <ScrollCorner />
        </HScroll>
      </BottomBar>
    </Window>
  );
}
